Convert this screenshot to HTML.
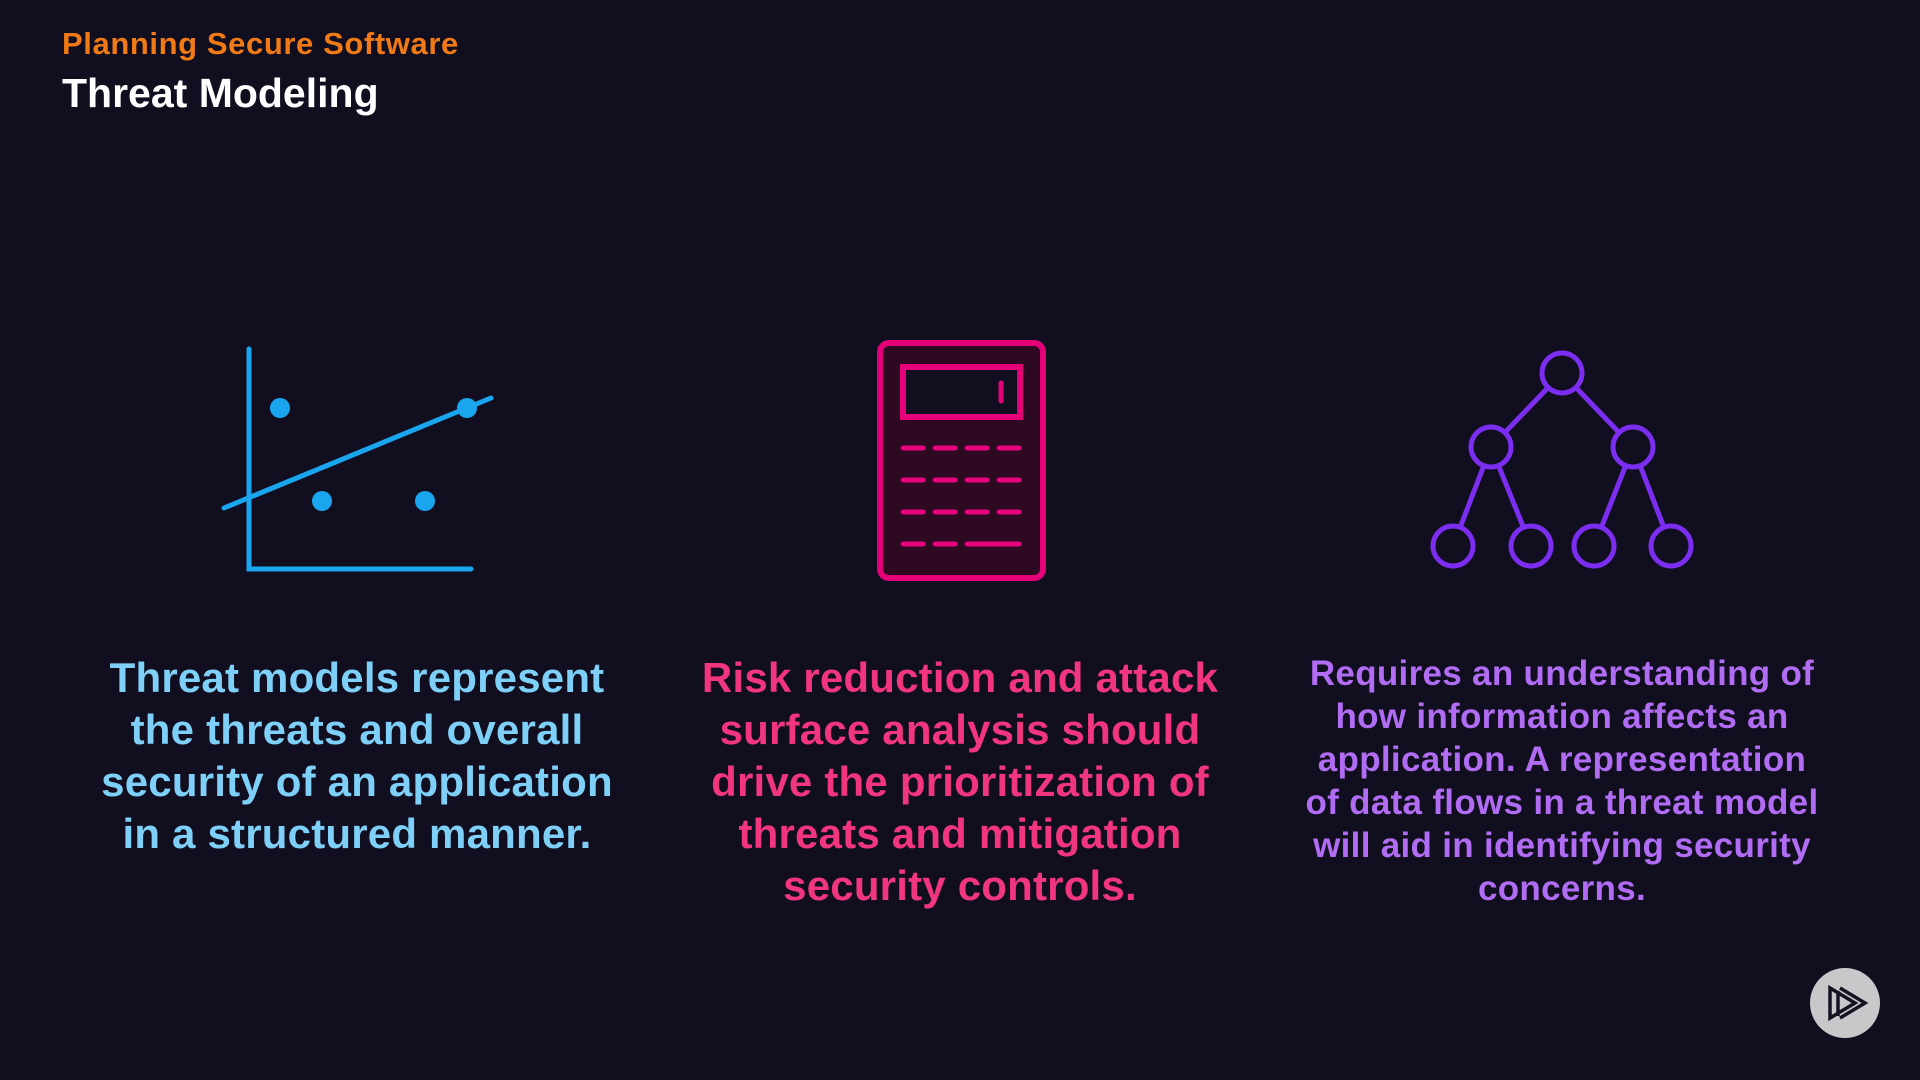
<!DOCTYPE html>
<html><head><meta charset="utf-8"><style>
html,body{margin:0;padding:0;background:#110e1f;width:1920px;height:1080px;overflow:hidden;font-family:"Liberation Sans",sans-serif;}
.h1{position:absolute;left:62px;top:26px;color:#f07a16;font-weight:bold;font-size:31px;letter-spacing:0.6px}
.h2{position:absolute;left:62px;top:70px;color:#fff;font-weight:bold;font-size:41px}
.col{position:absolute;text-align:center;font-weight:bold;}
.c1{left:57px;width:600px;top:652px;font-size:42px;line-height:52px;color:#7fd0f8;letter-spacing:0.2px}
.c2{left:660px;width:600px;top:652px;font-size:42px;line-height:52px;color:#f2357f;letter-spacing:0.2px}
.c3{left:1262px;width:600px;top:652px;font-size:35px;line-height:43px;color:#b06cf2;letter-spacing:0.3px}
</style></head><body>
<div class="h1">Planning Secure Software</div>
<div class="h2">Threat Modeling</div>
<svg width="1920" height="1080" style="position:absolute;left:0;top:0">
<g stroke="#1aa6ef" stroke-width="5" fill="none" stroke-linecap="round">
<polyline points="249,349 249,569 471,569"/>
<line x1="224" y1="508" x2="491" y2="398"/>
</g>
<g fill="#1aa6ef"><circle cx="280" cy="408" r="10"/><circle cx="467" cy="408" r="10"/><circle cx="322" cy="501" r="10"/><circle cx="425" cy="501" r="10"/></g>
<rect x="880" y="343" width="163" height="235" rx="9" fill="#2e0a22" stroke="#e5007a" stroke-width="6"/>
<rect x="903" y="367" width="117" height="50" fill="#110e1f" stroke="#e5007a" stroke-width="6"/>
<g stroke="#e5007a" stroke-width="5" stroke-linecap="round">
<line x1="1001" y1="383" x2="1001" y2="401"/>
<path d="M903 448h20M935 448h20M967 448h20M999 448h20M903 480h20M935 480h20M967 480h20M999 480h20M903 512h20M935 512h20M967 512h20M999 512h20M903 544h20M935 544h20M967 544h52"/>
</g>
<g stroke="#7b2ef0" stroke-width="5" fill="none">
<line x1="1562" y1="373" x2="1491" y2="447"/><line x1="1562" y1="373" x2="1633" y2="447"/>
<line x1="1491" y1="447" x2="1453" y2="546"/><line x1="1491" y1="447" x2="1531" y2="546"/>
<line x1="1633" y1="447" x2="1594" y2="546"/><line x1="1633" y1="447" x2="1671" y2="546"/>
<g fill="#110e1f">
<circle cx="1562" cy="373" r="20"/><circle cx="1491" cy="447" r="20"/><circle cx="1633" cy="447" r="20"/>
<circle cx="1453" cy="546" r="20"/><circle cx="1531" cy="546" r="20"/><circle cx="1594" cy="546" r="20"/><circle cx="1671" cy="546" r="20"/>
</g></g>
<circle cx="1845" cy="1003" r="35" fill="#c8c8ca"/>
<g fill="none" stroke="#151322" stroke-width="3.5" stroke-linejoin="miter">
<path d="M1830 988 L1830 1018 L1855 1003 Z"/>
<path d="M1838 991 L1838 1016"/>
<path d="M1840 988 L1865 1003 L1840 1018"/>
</g>
</svg>
<div class="col c1">Threat models represent<br>the threats and overall<br>security of an application<br>in a structured manner.</div>
<div class="col c2">Risk reduction and attack<br>surface analysis should<br>drive the prioritization of<br>threats and mitigation<br>security controls.</div>
<div class="col c3">Requires an understanding of<br>how information affects an<br>application. A representation<br>of data flows in a threat model<br>will aid in identifying security<br>concerns.</div>
</body></html>
